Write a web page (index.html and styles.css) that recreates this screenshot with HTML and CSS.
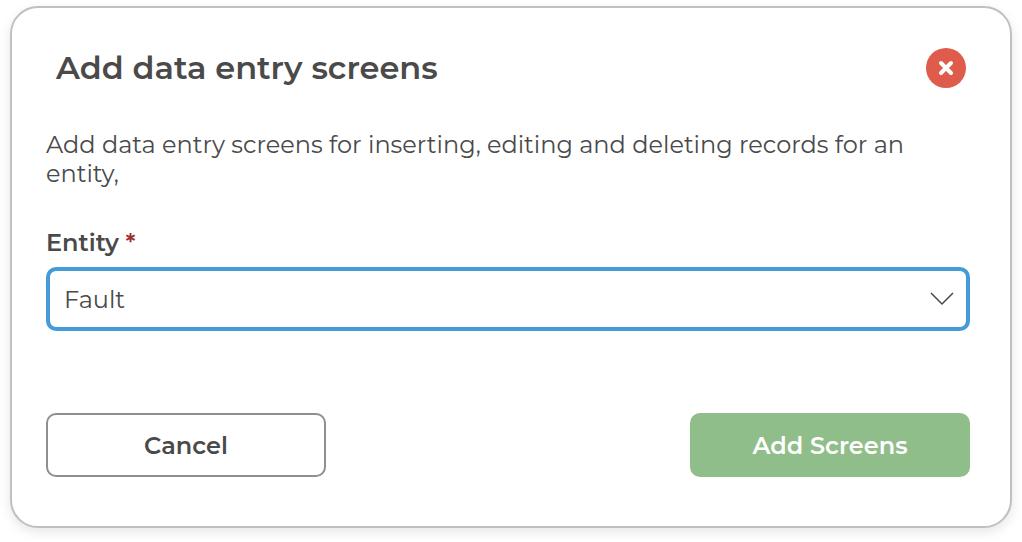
FILE: index.html
```html
<!DOCTYPE html>
<html lang="en">
<head>
<meta charset="utf-8">
<meta name="viewport" content="width=device-width, initial-scale=1">
<title>Add data entry screens</title>
<link rel="stylesheet" href="styles.css">
</head>
<body>
<form class="dialog" role="dialog" aria-labelledby="dialog-title">
  <header class="dialog-header">
    <h1 class="dialog-title" id="dialog-title">Add data entry screens</h1>
    <button class="close" type="button" aria-label="Close">
      <svg class="close-icon" viewBox="0 0 16 16" aria-hidden="true"><path d="M3 3l10 10M13 3L3 13"/></svg>
    </button>
  </header>
  <p class="description">Add data entry screens for inserting, editing and deleting records for an entity,</p>
  <label class="label" for="entity">Entity <span class="required">*</span></label>
  <div class="select-wrap">
    <select class="select" id="entity" required><option>Fault</option></select>
    <svg class="chevron" viewBox="0 0 24 14" aria-hidden="true"><path d="M1 1l11 11L23 1"/></svg>
  </div>
  <footer class="actions">
    <button class="button button-cancel" type="button">Cancel</button>
    <button class="button button-submit" type="submit">Add Screens</button>
  </footer>
</form>
</body>
</html>
```
FILE: styles.css
```css
* {
  box-sizing: border-box;
}

body {
  margin: 0;
  padding: 6px 10px 14px;
  background: #fff;
  color: #4a4a4a;
  font-family: Montserrat, "Open Sans", sans-serif;
  font-size: 24px;
}

.dialog {
  padding: 40px 40px 49px 34px;
  border: 2px solid #c0c0c0;
  border-radius: 28px;
  background: #fff;
  box-shadow: 0 4px 12px rgba(0, 0, 0, 0.1);
}

.dialog-header {
  display: flex;
  align-items: center;
  justify-content: space-between;
  padding: 0 4px 0 10px;
}

.dialog-title {
  margin: 0;
  font-size: 32px;
  line-height: 40px;
  font-weight: 600;
}

.close {
  display: grid;
  place-items: center;
  width: 40px;
  height: 40px;
  padding: 0;
  border: 0;
  border-radius: 50%;
  background: #df5b4c;
}

.close-icon {
  width: 16px;
  height: 16px;
  fill: none;
  stroke: #fff;
  stroke-width: 4;
  stroke-linecap: round;
}

.description {
  margin: 42px 0 40px;
  line-height: 29px;
}

.label {
  display: block;
  margin-bottom: 10px;
  line-height: 29px;
  font-weight: 600;
}

.required {
  color: #9c2b2b;
}

.select-wrap {
  display: grid;
  align-items: center;
}

.select {
  grid-area: 1 / 1;
  width: 100%;
  height: 64px;
  padding: 0 48px 0 14px;
  border: 4px solid #459bd7;
  border-radius: 10px;
  outline: 0;
  appearance: none;
  background: #fff;
  color: inherit;
  font: inherit;
}

.chevron {
  grid-area: 1 / 1;
  justify-self: end;
  width: 24px;
  height: 14px;
  margin-right: 16px;
  fill: none;
  stroke: #4a4a4a;
  stroke-width: 1.5;
  pointer-events: none;
}

.actions {
  display: flex;
  justify-content: space-between;
  margin-top: 82px;
}

.button {
  width: 280px;
  height: 64px;
  border: 2px solid #8f8f8f;
  border-radius: 10px;
  background: #fff;
  color: inherit;
  font: inherit;
  font-weight: 600;
}

.button-submit {
  border-color: #90be8b;
  background: #90be8b;
  color: #fff;
}
```
